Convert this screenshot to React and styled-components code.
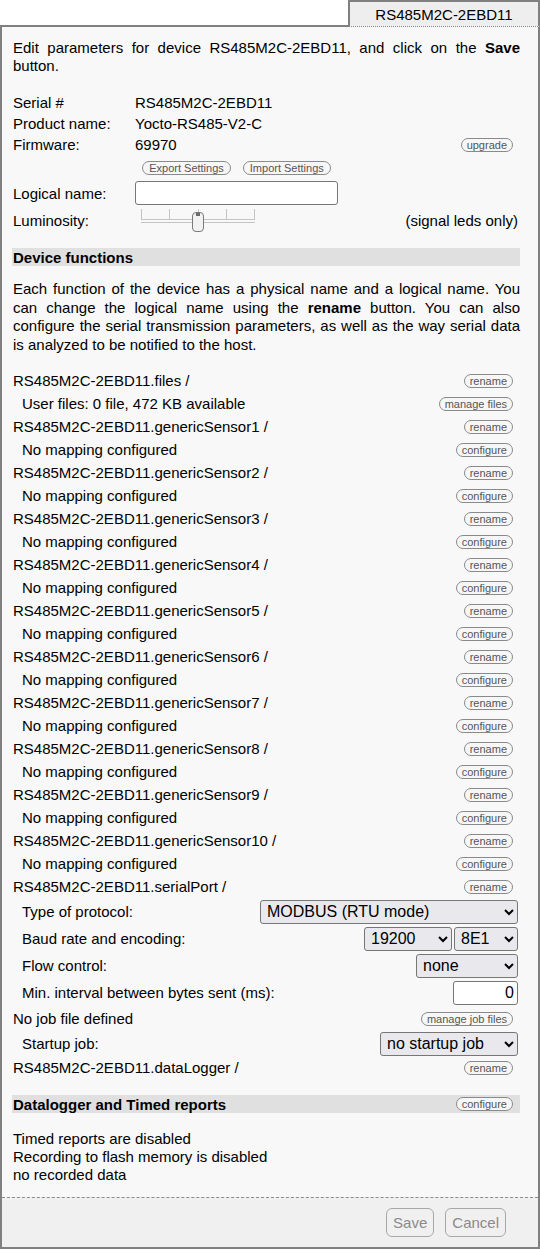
import React from "react";
import styled, { createGlobalStyle } from "styled-components";

const GlobalStyle = createGlobalStyle`
  body {
    margin: 0;
    background: #ffffff;
    font-family: "Liberation Sans", Arial, sans-serif;
    font-size: 15px;
    color: #000;
  }
`;

const DEVICE = "RS485M2C-2EBD11";

const sensors = [1, 2, 3, 4, 5, 6, 7, 8, 9, 10];

const LuminositySlider = () => (
  <svg width="116" height="24" viewBox="0 0 116 24">
    <g stroke="#c4c4c4" strokeWidth="1" fill="none">
      <line x1="1.5" y1="0" x2="1.5" y2="11" />
      <line x1="29.5" y1="0" x2="29.5" y2="11" />
      <line x1="58.5" y1="0" x2="58.5" y2="11" />
      <line x1="86.5" y1="0" x2="86.5" y2="11" />
      <line x1="114.5" y1="0" x2="114.5" y2="11" />
      <line x1="1" y1="10.5" x2="115" y2="10.5" />
      <line x1="1" y1="13.5" x2="115" y2="13.5" />
    </g>
    <rect x="52.5" y="3.5" width="11" height="19" rx="3.5" fill="#f2f2f2" stroke="#7a7a7a" />
    <rect x="56" y="4" width="4" height="3" fill="#6a6a6a" />
  </svg>
);

const App = () => {
  return (
    <>
      <GlobalStyle />
      <TabStrip>
        <TabFiller />
        <Tab>{DEVICE}</Tab>
      </TabStrip>
      <Panel>
        <Content>
          <Intro>
            Edit parameters for device {DEVICE}, and click on the <b>Save</b> button.
          </Intro>

          <InfoRow $h={21}>
            <Label>Serial #</Label>
            <Value>{DEVICE}</Value>
          </InfoRow>
          <InfoRow $h={21}>
            <Label>Product name:</Label>
            <Value>Yocto-RS485-V2-C</Value>
          </InfoRow>
          <InfoRow $h={21}>
            <Label>Firmware:</Label>
            <Value>69970</Value>
            <Pill>upgrade</Pill>
          </InfoRow>
          <InfoRow $h={25}>
            <Label />
            <ButtonCell>
              <Pill>Export Settings</Pill>
              <Pill>Import Settings</Pill>
            </ButtonCell>
          </InfoRow>
          <InfoRow $h={26}>
            <Label>Logical name:</Label>
            <TextInput type="text" $w={203} />
          </InfoRow>
          <InfoRow $h={28}>
            <Label>Luminosity:</Label>
            <SliderCell>
              <LuminositySlider />
            </SliderCell>
            <Value $right>(signal leds only)</Value>
          </InfoRow>

          <SectionHeader $top={14}>Device functions</SectionHeader>

          <Description>
            Each function of the device has a physical name and a logical name. You can change the
            logical name using the <b>rename</b> button. You can also configure the serial
            transmission parameters, as well as the way serial data is analyzed to be notified to
            the host.
          </Description>

          <FunctionList>
            <FnRow>
              <span>{DEVICE}.files /</span>
              <Pill>rename</Pill>
            </FnRow>
            <FnRow $sub>
              <span>User files: 0 file, 472 KB available</span>
              <Pill>manage files</Pill>
            </FnRow>
            {sensors.map((n) => (
              <React.Fragment key={n}>
                <FnRow>
                  <span>
                    {DEVICE}.genericSensor{n} /
                  </span>
                  <Pill>rename</Pill>
                </FnRow>
                <FnRow $sub>
                  <span>No mapping configured</span>
                  <Pill>configure</Pill>
                </FnRow>
              </React.Fragment>
            ))}
            <FnRow>
              <span>{DEVICE}.serialPort /</span>
              <Pill>rename</Pill>
            </FnRow>
            <FnRow $sub $h={27}>
              <span>Type of protocol:</span>
              <Select $w={258} defaultValue="modbus">
                <option value="modbus">MODBUS (RTU mode)</option>
              </Select>
            </FnRow>
            <FnRow $sub $h={27}>
              <span>Baud rate and encoding:</span>
              <Controls>
                <Select $w={88} defaultValue="19200">
                  <option value="19200">19200</option>
                </Select>
                <Select $w={64} defaultValue="8E1">
                  <option value="8E1">8E1</option>
                </Select>
              </Controls>
            </FnRow>
            <FnRow $sub $h={27}>
              <span>Flow control:</span>
              <Select $w={102} defaultValue="none">
                <option value="none">none</option>
              </Select>
            </FnRow>
            <FnRow $sub $h={27}>
              <span>Min. interval between bytes sent (ms):</span>
              <TextInput type="text" $w={65} $right defaultValue="0" />
            </FnRow>
            <FnRow $h={25}>
              <span>No job file defined</span>
              <Pill>manage job files</Pill>
            </FnRow>
            <FnRow $sub $h={25}>
              <span>Startup job:</span>
              <Select $w={138} defaultValue="none">
                <option value="none">no startup job</option>
              </Select>
            </FnRow>
            <FnRow>
              <span>{DEVICE}.dataLogger /</span>
              <Pill>rename</Pill>
            </FnRow>
          </FunctionList>

          <SectionHeader $top={16}>
            <span>Datalogger and Timed reports</span>
            <Pill>configure</Pill>
          </SectionHeader>

          <Status>
            <div>Timed reports are disabled</div>
            <div>Recording to flash memory is disabled</div>
            <div>no recorded data</div>
          </Status>
        </Content>
        <Footer>
          <FooterButton disabled>Save</FooterButton>
          <FooterButton>Cancel</FooterButton>
        </Footer>
      </Panel>
    </>
  );
};

const TabStrip = styled.div`
  display: flex;
  height: 27px;
`;

const TabFiller = styled.div`
  flex: 1;
  border-bottom: 2px solid #808080;
  border-left: 2px solid #808080;
  margin-top: 25px;
`;

const Tab = styled.div`
  width: 188px;
  border: 2px solid #808080;
  border-bottom: 1px dotted #8c8c8c;
  background: #eeeeee;
  text-align: center;
  line-height: 25px;
  font-size: 15px;
`;

const Panel = styled.div`
  border: 2px solid #808080;
  border-top: none;
  background: #f8f8f8;
`;

const Content = styled.div`
  padding: 12px 18px 13px 10px;
`;

const Intro = styled.p`
  margin: 0 0 17px 1px;
  line-height: 18px;
  text-align: justify;
`;

const InfoRow = styled.div`
  display: flex;
  align-items: center;
  height: ${(p) => p.$h}px;
  padding: 0 2px 0 1px;
`;

const Label = styled.span`
  width: 122px;
  flex: none;
`;

const Value = styled.span`
  flex: 1;
  text-align: ${(p) => (p.$right ? "right" : "left")};
`;

const ButtonCell = styled.div`
  width: 203px;
  display: flex;
  justify-content: center;
  gap: 12px;

  & > button {
    margin-right: 0;
    padding: 0 6px;
  }
`;

const SliderCell = styled.div`
  display: flex;
  padding-left: 5px;
  padding-top: 2px;
`;

const Pill = styled.button`
  flex: none;
  font-family: "Liberation Sans", Arial, sans-serif;
  font-size: 11px;
  color: #555;
  background: #f7f7f7;
  border: 1px solid #8a8a8a;
  border-radius: 7px;
  padding: 0 5px;
  height: 14px;
  line-height: 12px;
  margin-right: 5px;
`;

const TextInput = styled.input`
  box-sizing: border-box;
  width: ${(p) => p.$w}px;
  height: 24px;
  border: 1px solid #767676;
  border-radius: 3px;
  background: #fff;
  font-family: "Liberation Sans", Arial, sans-serif;
  font-size: 16px;
  text-align: ${(p) => (p.$right ? "right" : "left")};
  padding: 0 3px;
  color: #000;
`;

const SectionHeader = styled.div`
  display: flex;
  align-items: center;
  justify-content: space-between;
  margin-top: ${(p) => p.$top}px;
  height: 18px;
  padding: 0 2px 0 1px;
  background: #e0e0e0;
  font-weight: bold;
`;

const Description = styled.p`
  margin: 14px 0 15px 1px;
  line-height: 18.5px;
  text-align: justify;
`;

const FunctionList = styled.div`
  display: flex;
  flex-direction: column;
`;

const FnRow = styled.div`
  display: flex;
  align-items: center;
  justify-content: space-between;
  height: ${(p) => p.$h || 23}px;
  padding: 0 2px 0 ${(p) => (p.$sub ? 10 : 1)}px;
`;

const Controls = styled.div`
  display: flex;
  gap: 2px;
`;

const Select = styled.select`
  box-sizing: border-box;
  width: ${(p) => p.$w}px;
  height: 24px;
  font-family: "Liberation Sans", Arial, sans-serif;
  font-size: 16px;
  color: #000;
  background-color: #e9e9ed;
  border: 1px solid #767676;
  border-radius: 3px;
  padding: 0 2px;
`;

const Status = styled.div`
  margin: 17px 0 0 1px;
  line-height: 18px;
`;

const Footer = styled.div`
  display: flex;
  justify-content: flex-end;
  gap: 11px;
  height: 50px;
  box-sizing: border-box;
  padding: 10px 32px 0 0;
  border-top: 1px dashed #8c8c8c;
  background: #f0f0f0;
`;

const FooterButton = styled.button`
  height: 29px;
  padding: 0 6px;
  font-family: "Liberation Sans", Arial, sans-serif;
  font-size: 15px;
  color: #8a8a8a;
  background: #f0f0f0;
  border: 1px solid #a8a8a8;
  border-radius: 6px;
`;

export default App;
